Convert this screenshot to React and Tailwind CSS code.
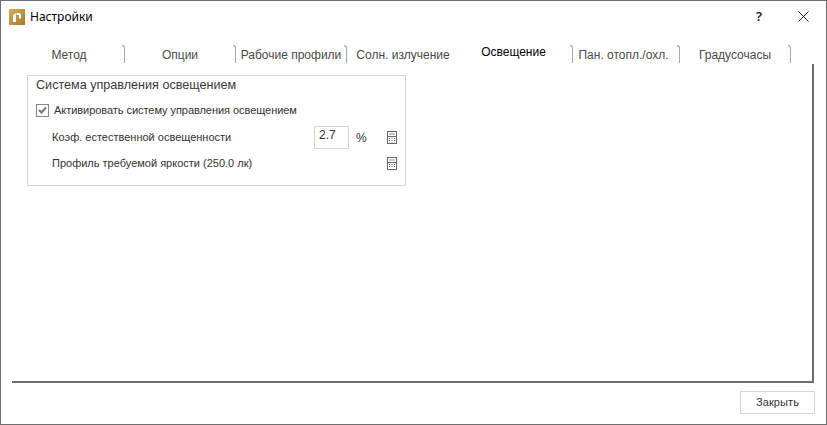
const tabs = [
  { label: 'Метод', w: 'w-[111px]', sep: true, pad: 'pl-[2px]' },
  { label: 'Опции', w: 'w-[111px]', sep: true, pad: 'pl-[2px]' },
  { label: 'Рабочие профили', w: 'w-[111px]', sep: true, pad: 'pl-[2px]' },
  { label: 'Солн. излучение', w: 'w-[111px]', sep: false, pad: 'pl-[1px]' },
  { label: 'Освещение', w: 'w-[115px]', sep: true, pad: 'pr-[1px]', active: true },
  { label: 'Пан. отопл./охл.', w: 'w-[107px]', sep: true, pad: 'pr-[3px]' },
  { label: 'Градусочасы', w: 'w-[111px]', sep: true, pad: 'pl-[2px]' },
];

const bodyFont = { fontFamily: '"Liberation Sans", "Noto Sans", sans-serif' };

function CalcIcon() {
  return (
    <svg width="10" height="13" viewBox="0 0 10 13" className="block shrink-0">
      <rect x="0.5" y="0.5" width="9" height="12" fill="#fff" stroke="#666" />
      <rect x="2" y="2" width="6" height="2" fill="#c4c4c4" />
      <path d="M0 5.5H10" stroke="#666" />
      <path d="M2 7.5h1M4.5 7.5h1M7 7.5h1M2 9.5h1M4.5 9.5h1M7 9.5h1" stroke="#555" />
    </svg>
  );
}

function AppLogo() {
  return (
    <svg width="16" height="16" viewBox="0 0 16 16" className="block shrink-0">
      <defs>
        <linearGradient id="gold" x1="0" y1="0" x2="1" y2="1">
          <stop offset="0" stopColor="#d9ad5c" />
          <stop offset="1" stopColor="#a87a2c" />
        </linearGradient>
      </defs>
      <rect width="16" height="16" fill="url(#gold)" />
      <path d="M4 13V6L7 4V13Z" fill="#fff" />
      <path d="M7.5 4H10C11.2 4 12 4.8 12 6V9.5H10V6H7.5Z" fill="#fff" />
    </svg>
  );
}

function Tab({ tab }) {
  return (
    <div className={`${tab.w} flex h-[19px] shrink-0`}>
      <div
        className={`min-w-0 flex-1 text-center text-[12px] leading-[18px] whitespace-nowrap ${tab.pad} ${
          tab.active ? '-translate-y-[2px] text-black' : 'translate-y-[1px] text-[#4a4a4a]'
        }`}
      >
        {tab.label}
      </div>
      {tab.sep && <div className="h-[18px] w-[3px] shrink-0 rounded-tr-[3px] border-t border-r border-[#a8a8a8]" />}
    </div>
  );
}

export default function App() {
  return (
    <div
      className="flex h-[425px] w-[827px] flex-col overflow-hidden border border-[#6e6e6e] bg-white text-[#333]"
      style={{ fontFamily: '"Noto Sans", "Liberation Sans", sans-serif' }}
    >
      <div className="flex h-[30px] shrink-0 items-center pt-[1px] pl-[8px]">
        <AppLogo />
        <span className="ml-[5px] text-[12px] text-black">Настройки</span>
        <span className="ml-auto text-[13px] font-semibold text-[#222]">?</span>
        <svg width="11" height="11" viewBox="0 0 11 11" className="mr-[17px] ml-[36px] block">
          <path d="M0.5 0.5L10.5 10.5M10.5 0.5L0.5 10.5" stroke="#222" />
        </svg>
      </div>

      <div className="mt-[14px] flex shrink-0 pl-[13px]" style={bodyFont}>
        {tabs.map((t) => (
          <Tab key={t.label} tab={t} />
        ))}
      </div>

      <div
        className="mr-[12px] ml-[11px] h-[319px] shrink-0 border-r-2 border-b-2 border-[#6e6e6e] pt-[11px] pl-[15px]"
        style={bodyFont}
      >
        <div className="h-[111px] w-[379px] border border-[#d6d6d6] pl-[8px]">
          <div className="text-[12.6px] leading-[19px] text-[#3a3a3a]">Система управления освещением</div>
          <div className="mt-[8px] flex h-[14px] items-center">
            <div className="flex h-[13px] w-[13px] items-center justify-center border border-[#888]">
              <svg width="9" height="8" viewBox="0 0 9 8" className="block">
                <path d="M1 4L3.5 6.5L8 1.5" fill="none" stroke="#777" strokeWidth="2" />
              </svg>
            </div>
            <span className="ml-[5px] text-[11px] tracking-[-0.05px] whitespace-nowrap text-[#333]">Активировать систему управления освещением</span>
          </div>
          <div className="mt-[9px] flex h-[23px] items-center pl-[16px]">
            <span className="w-[262px] text-[11px] whitespace-nowrap">Коэф. естественной освещенности</span>
            <div className="h-[23px] w-[35px] border border-[#d6d6d6] pl-[4px] text-[12px] leading-[16px]">2.7</div>
            <span className="ml-[7px] w-[31px] text-[12px]">%</span>
            <CalcIcon />
          </div>
          <div className="mt-[3px] flex h-[22px] items-center pl-[16px]">
            <span className="w-[335px] text-[11px] whitespace-nowrap">Профиль требуемой яркости (250.0 лк)</span>
            <CalcIcon />
          </div>
        </div>
      </div>

      <div className="flex flex-1 items-start justify-end pt-[8px] pr-[11px]" style={bodyFont}>
        <button className="h-[23px] w-[75px] border border-[#d6d6d6] bg-white text-[11px] tracking-[0.1px] text-[#333]">Закрыть</button>
      </div>
    </div>
  );
}
